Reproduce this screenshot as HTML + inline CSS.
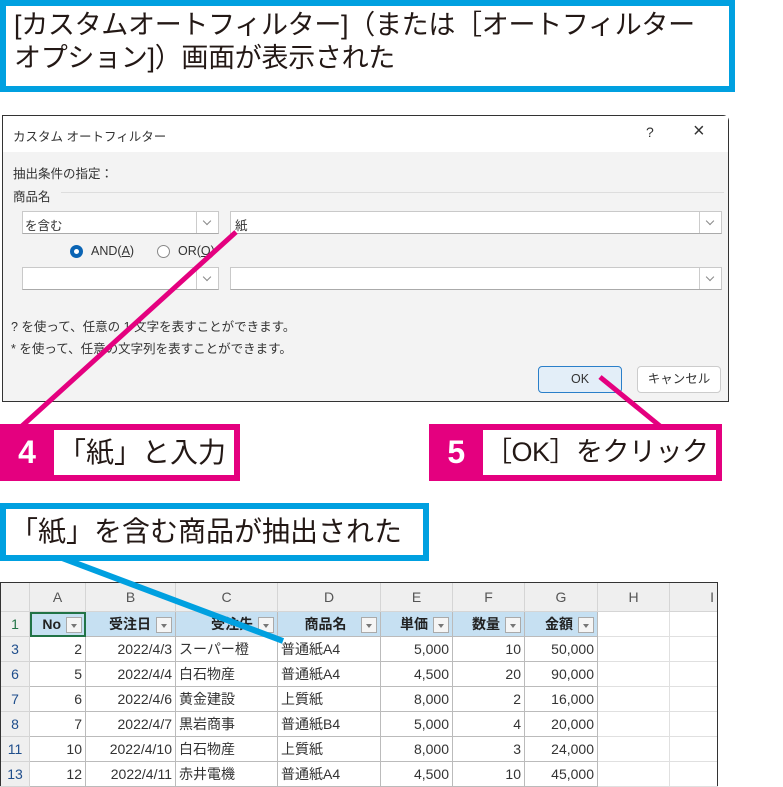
<!DOCTYPE html>
<html><head><meta charset="utf-8"><style>
*{margin:0;padding:0;box-sizing:border-box}
body{width:783px;height:786px;background:#fff;position:relative;overflow:hidden;font-family:"Liberation Sans","Noto Sans CJK JP",sans-serif;color:#222}
.abs{position:absolute}
.bluebox{border:6px solid #00a0e0;background:#fff}
.pinkbox{border:6px solid #e4007f;background:#fff}
.dlg{left:2px;top:115px;width:727px;height:287px;border:1px solid #333;background:#f3f3f3;border-radius:0 6px 0 0}
.title{left:0;top:0;width:725px;height:36px;background:#fff}
.inp{background:#fff;border:1px solid #c9c9c9;border-bottom-color:#aaa}
.dd{position:absolute;right:0;top:0;width:22px;height:100%;border-left:1px solid #ccc;background:#fff}
.dd:after{content:"";position:absolute;left:7px;top:6px;width:5px;height:5px;border-right:1px solid #888;border-bottom:1px solid #888;transform:rotate(45deg)}
.t12{font-size:12.5px;color:#333}
table{border-collapse:collapse;position:absolute;left:0;top:582px;font-size:14px}
td{border:1px solid #bbb;height:25px;padding:0 3px;white-space:nowrap;color:#333}
tr.h td{height:29px;background:#efefef;text-align:center;color:#555;border-color:#d5d5d5;font-size:14px}
td.rh{background:#efefef;text-align:center;color:#1f4e8c;border-color:#d5d5d5}
tr.r1 td.c{background:#c6e0f2;font-weight:bold;text-align:right;padding-right:24px;position:relative;color:#222}
.fb{position:absolute;right:3px;top:5px;width:16px;height:16px;border:1px solid #aaa;background:#f5f5f5}
.fb:after{content:"";position:absolute;left:4px;top:6px;border-left:3px solid transparent;border-right:3px solid transparent;border-top:4px solid #777}
td.n{text-align:right}
td.e{border-color:#e0e0e0}
.cl{font-size:28px;line-height:45px;color:#231815;white-space:nowrap}
.num{position:absolute;left:-6px;top:-6px;width:54px;height:57px;background:#e4007f;color:#fff;font-weight:bold;font-size:32px;text-align:center;line-height:57px}
</style></head><body>

<div class="abs bluebox" style="left:0;top:0;width:735px;height:92px;padding:3px 0 0 8px;font-size:27px;line-height:33px;color:#231815;white-space:nowrap;letter-spacing:-0.3px">[カスタムオートフィルター]（または［オートフィルター<br>オプション]）画面が表示された</div>

<div class="abs dlg">
 <div class="abs title"><span class="abs" style="left:10px;top:10px;font-size:12.5px;color:#333">カスタム オートフィルター</span>
 <span class="abs" style="left:643px;top:8px;font-size:14px;color:#333">?</span>
 <span class="abs" style="left:690px;top:4px;font-size:20px;color:#333">×</span></div>
 <div class="abs t12" style="left:10px;top:47px">抽出条件の指定：</div>
 <div class="abs t12" style="left:10px;top:70px">商品名</div>
 <div class="abs" style="left:58px;top:76px;width:663px;height:1px;background:#ddd"></div>
 <div class="abs inp t12" style="left:19px;top:95px;width:197px;height:23px;padding:3px 2px">を含む<div class="dd"></div></div>
 <div class="abs inp t12" style="left:227px;top:95px;width:492px;height:23px;padding:3px 4px">紙<div class="dd"></div></div>
 <div class="abs" style="left:67px;top:129px;width:13px;height:13px;border-radius:50%;background:#0a64b4"><div class="abs" style="left:4px;top:4px;width:5px;height:5px;border-radius:50%;background:#fff"></div></div>
 <div class="abs t12" style="left:88px;top:128px">AND(<u>A</u>)</div>
 <div class="abs" style="left:154px;top:129px;width:13px;height:13px;border-radius:50%;border:1px solid #888;background:#fff"></div>
 <div class="abs t12" style="left:175px;top:128px">OR(<u>O</u>)</div>
 <div class="abs inp" style="left:19px;top:151px;width:197px;height:23px"><div class="dd"></div></div>
 <div class="abs inp" style="left:227px;top:151px;width:492px;height:23px"><div class="dd"></div></div>
 <div class="abs t12" style="left:8px;top:200px">? を使って、任意の 1 文字を表すことができます。</div>
 <div class="abs t12" style="left:8px;top:222px">* を使って、任意の文字列を表すことができます。</div>
 <div class="abs t12" style="left:535px;top:250px;width:84px;height:27px;border:1px solid #2a7fc9;border-radius:4px;background:#e3eef8;text-align:center;line-height:25px">OK</div>
 <div class="abs t12" style="left:634px;top:250px;width:84px;height:27px;border:1px solid #ccc;border-radius:4px;background:#fff;text-align:center;line-height:25px">キャンセル</div>
</div>

<table>
<tr class="h"><td style="width:29px"></td><td style="width:56px">A</td><td style="width:90px">B</td><td style="width:102px">C</td><td style="width:103px">D</td><td style="width:72px">E</td><td style="width:72px">F</td><td style="width:73px">G</td><td style="width:72px">H</td><td style="width:48px;text-align:right">I</td></tr>
<tr class="r1"><td class="rh" style="color:#217346">1</td><td class="c" style="outline:2px solid #217346;outline-offset:-2px">No<span class="fb"></span></td><td class="c">受注日<span class="fb"></span></td><td class="c">受注先<span class="fb"></span></td><td class="c" style="text-align:center;padding-right:10px">商品名<span class="fb"></span></td><td class="c">単価<span class="fb"></span></td><td class="c">数量<span class="fb"></span></td><td class="c">金額<span class="fb"></span></td><td class="e"></td><td class="e"></td></tr>
<tr><td class="rh">3</td><td class="n">2</td><td class="n">2022/4/3</td><td>スーパー橙</td><td>普通紙A4</td><td class="n">5,000</td><td class="n">10</td><td class="n">50,000</td><td class="e"></td><td class="e"></td></tr>
<tr><td class="rh">6</td><td class="n">5</td><td class="n">2022/4/4</td><td>白石物産</td><td>普通紙A4</td><td class="n">4,500</td><td class="n">20</td><td class="n">90,000</td><td class="e"></td><td class="e"></td></tr>
<tr><td class="rh">7</td><td class="n">6</td><td class="n">2022/4/6</td><td>黄金建設</td><td>上質紙</td><td class="n">8,000</td><td class="n">2</td><td class="n">16,000</td><td class="e"></td><td class="e"></td></tr>
<tr><td class="rh">8</td><td class="n">7</td><td class="n">2022/4/7</td><td>黒岩商事</td><td>普通紙B4</td><td class="n">5,000</td><td class="n">4</td><td class="n">20,000</td><td class="e"></td><td class="e"></td></tr>
<tr><td class="rh">11</td><td class="n">10</td><td class="n">2022/4/10</td><td>白石物産</td><td>上質紙</td><td class="n">8,000</td><td class="n">3</td><td class="n">24,000</td><td class="e"></td><td class="e"></td></tr>
<tr><td class="rh">13</td><td class="n">12</td><td class="n">2022/4/11</td><td>赤井電機</td><td>普通紙A4</td><td class="n">4,500</td><td class="n">10</td><td class="n">45,000</td><td class="e"></td><td class="e"></td></tr>
</table>
<div class="abs" style="left:0;top:582px;width:718px;height:204px;border:1.5px solid #333;border-bottom:none"></div>

<svg class="abs" style="left:0;top:0" width="783" height="786">
<line x1="236" y1="232" x2="22" y2="426" stroke="#e4007f" stroke-width="5"/>
<line x1="600" y1="377" x2="660" y2="426" stroke="#e4007f" stroke-width="5"/>
<line x1="62" y1="558" x2="283" y2="641" stroke="#00a0e0" stroke-width="6"/>
</svg>

<div class="abs pinkbox cl" style="left:0;top:424px;width:240px;height:57px;padding-left:52px">「紙」と入力<div class="num">4</div></div>
<div class="abs pinkbox cl" style="left:429px;top:424px;width:293px;height:57px;padding-left:50px;font-size:27px;letter-spacing:-0.5px">［OK］をクリック<div class="num">5</div></div>

<div class="abs bluebox cl" style="left:0;top:503px;width:429px;height:58px;padding-left:4px;font-size:28px;line-height:46px">「紙」を含む商品が抽出された</div>
</body></html>
